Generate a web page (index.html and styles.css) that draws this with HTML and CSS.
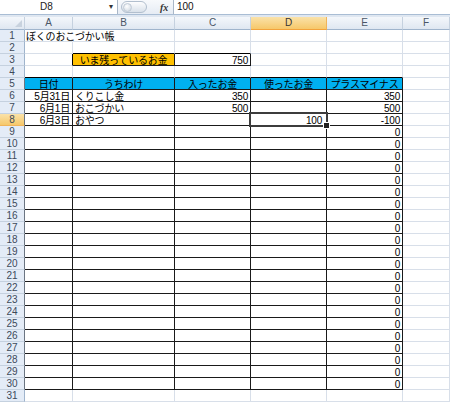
FILE: index.html
```html
<!DOCTYPE html>
<html lang="ja">
<head>
<meta charset="utf-8">
<title>ぼくのおこづかい帳</title>
<link rel="stylesheet" href="styles.css">
</head>
<body>
<div class="fbar">
  <div class="namebox"><span class="nb-text">D8</span><span class="nb-arrow">▾</span></div>
  <div class="fxarea">
    <span class="pill"><span class="knob"></span></span>
    <span class="fx">fx</span>
  </div>
  <div class="finput">100</div>
</div>
<div class="spacer"></div>
<div class="sheet">
  <div class="ch corner"><span class="tri"></span></div><div class="ch">A</div><div class="ch">B</div><div class="ch">C</div><div class="ch chsel">D</div><div class="ch">E</div><div class="ch">F</div>

  <div class="rh">1</div><div class="c over">ぼくのおこづかい帳</div><div class="c"></div><div class="c"></div><div class="c"></div><div class="c"></div><div class="c"></div>
  <div class="rh">2</div><div class="c"></div><div class="c bb"></div><div class="c bb"></div><div class="c"></div><div class="c"></div><div class="c"></div>
  <div class="rh">3</div><div class="c br"></div><div class="c t or ctr">いま残っているお金</div><div class="c t r">750</div><div class="c"></div><div class="c"></div><div class="c"></div>
  <div class="rh">4</div><div class="c bb"></div><div class="c bb"></div><div class="c bb"></div><div class="c bb"></div><div class="c bb"></div><div class="c"></div>
  <div class="rh bl">5</div><div class="c t hd ctr">日付</div><div class="c t hd ctr">うちわけ</div><div class="c t hd ctr">入ったお金</div><div class="c t hd ctr">使ったお金</div><div class="c t hd ctr">プラスマイナス</div><div class="c"></div>
  <div class="rh bl">6</div><div class="c t r">5月31日</div><div class="c t">くりこし金</div><div class="c t r">350</div><div class="c t"></div><div class="c t r">350</div><div class="c"></div>
  <div class="rh bl">7</div><div class="c t r">6月1日</div><div class="c t">おこづかい</div><div class="c t r">500</div><div class="c t"></div><div class="c t r">500</div><div class="c"></div>
  <div class="rh bl rsel">8</div><div class="c t r">6月3日</div><div class="c t">おやつ</div><div class="c t"></div><div class="c t r active">100</div><div class="c t r">-100</div><div class="c"></div>
  <div class="rh bl">9</div><div class="c t"></div><div class="c t"></div><div class="c t"></div><div class="c t"></div><div class="c t r">0</div><div class="c"></div>
  <div class="rh bl">10</div><div class="c t"></div><div class="c t"></div><div class="c t"></div><div class="c t"></div><div class="c t r">0</div><div class="c"></div>
  <div class="rh bl">11</div><div class="c t"></div><div class="c t"></div><div class="c t"></div><div class="c t"></div><div class="c t r">0</div><div class="c"></div>
  <div class="rh bl">12</div><div class="c t"></div><div class="c t"></div><div class="c t"></div><div class="c t"></div><div class="c t r">0</div><div class="c"></div>
  <div class="rh bl">13</div><div class="c t"></div><div class="c t"></div><div class="c t"></div><div class="c t"></div><div class="c t r">0</div><div class="c"></div>
  <div class="rh bl">14</div><div class="c t"></div><div class="c t"></div><div class="c t"></div><div class="c t"></div><div class="c t r">0</div><div class="c"></div>
  <div class="rh bl">15</div><div class="c t"></div><div class="c t"></div><div class="c t"></div><div class="c t"></div><div class="c t r">0</div><div class="c"></div>
  <div class="rh bl">16</div><div class="c t"></div><div class="c t"></div><div class="c t"></div><div class="c t"></div><div class="c t r">0</div><div class="c"></div>
  <div class="rh bl">17</div><div class="c t"></div><div class="c t"></div><div class="c t"></div><div class="c t"></div><div class="c t r">0</div><div class="c"></div>
  <div class="rh bl">18</div><div class="c t"></div><div class="c t"></div><div class="c t"></div><div class="c t"></div><div class="c t r">0</div><div class="c"></div>
  <div class="rh bl">19</div><div class="c t"></div><div class="c t"></div><div class="c t"></div><div class="c t"></div><div class="c t r">0</div><div class="c"></div>
  <div class="rh bl">20</div><div class="c t"></div><div class="c t"></div><div class="c t"></div><div class="c t"></div><div class="c t r">0</div><div class="c"></div>
  <div class="rh bl">21</div><div class="c t"></div><div class="c t"></div><div class="c t"></div><div class="c t"></div><div class="c t r">0</div><div class="c"></div>
  <div class="rh bl">22</div><div class="c t"></div><div class="c t"></div><div class="c t"></div><div class="c t"></div><div class="c t r">0</div><div class="c"></div>
  <div class="rh bl">23</div><div class="c t"></div><div class="c t"></div><div class="c t"></div><div class="c t"></div><div class="c t r">0</div><div class="c"></div>
  <div class="rh bl">24</div><div class="c t"></div><div class="c t"></div><div class="c t"></div><div class="c t"></div><div class="c t r">0</div><div class="c"></div>
  <div class="rh bl">25</div><div class="c t"></div><div class="c t"></div><div class="c t"></div><div class="c t"></div><div class="c t r">0</div><div class="c"></div>
  <div class="rh bl">26</div><div class="c t"></div><div class="c t"></div><div class="c t"></div><div class="c t"></div><div class="c t r">0</div><div class="c"></div>
  <div class="rh bl">27</div><div class="c t"></div><div class="c t"></div><div class="c t"></div><div class="c t"></div><div class="c t r">0</div><div class="c"></div>
  <div class="rh bl">28</div><div class="c t"></div><div class="c t"></div><div class="c t"></div><div class="c t"></div><div class="c t r">0</div><div class="c"></div>
  <div class="rh bl">29</div><div class="c t"></div><div class="c t"></div><div class="c t"></div><div class="c t"></div><div class="c t r">0</div><div class="c"></div>
  <div class="rh bl">30</div><div class="c t"></div><div class="c t"></div><div class="c t"></div><div class="c t"></div><div class="c t r">0</div><div class="c"></div>
  <div class="rh">31</div><div class="c"></div><div class="c"></div><div class="c"></div><div class="c"></div><div class="c"></div><div class="c"></div>
</div>
</body>
</html>
```
FILE: styles.css
```css
* { box-sizing: border-box; }
html, body { margin: 0; padding: 0; }
body {
  width: 450px;
  height: 403px;
  overflow: hidden;
  background: #ffffff;
  font-family: "Liberation Sans", "Noto Sans CJK JP", sans-serif;
  color: #000;
}

/* formula bar */
.fbar {
  display: flex;
  height: 15px;
  background: linear-gradient(#f7f9fc, #e6ecf4);
  border-bottom: 1px solid #a9bdd4;
  font-size: 10px;
}
.namebox {
  width: 118px;
  background: #fff;
  border-right: 1px solid #a9b7c8;
  display: flex;
  align-items: center;
}
.nb-text {
  flex: 1;
  text-align: center;
  line-height: 14px;
  color: #222;
  margin-right: 12px;
}
.nb-arrow {
  width: 12px;
  text-align: center;
  font-size: 8px;
  color: #333;
  line-height: 14px;
}
.fxarea {
  width: 55px;
  display: flex;
  align-items: center;
  padding-left: 3px;
}
.pill {
  width: 26px;
  height: 12px;
  border-radius: 6px;
  background: linear-gradient(#fdfdfe, #d9e1ea);
  border: 1px solid #b2bfce;
  display: flex;
  align-items: center;
  padding-left: 1px;
}
.knob {
  width: 9px;
  height: 9px;
  border-radius: 50%;
  background: radial-gradient(circle at 40% 35%, #ffffff, #c9d3de);
  border: 1px solid #c0cad6;
}
.fx {
  margin-left: 13px;
  font-family: "Liberation Serif", serif;
  font-style: italic;
  font-weight: bold;
  font-size: 10px;
  color: #333;
}
.finput {
  flex: 1;
  background: #fff;
  border-left: 1px solid #a9b7c8;
  padding-left: 3px;
  line-height: 14px;
  color: #111;
}
.spacer {
  height: 2px;
  background: #dfe7f1;
}

/* sheet */
.sheet {
  display: grid;
  grid-template-columns: 25px 48px 102px 76px 76px 76px 47px;
  grid-template-rows: 13px repeat(31, 12px);
  font-size: 10px;
}
.ch {
  background: linear-gradient(#f4f7fb, #dfe7f1);
  border-right: 1px solid #c5d1df;
  border-bottom: 1px solid #9fb4cc;
  text-align: center;
  line-height: 12px;
  color: #4a5666;
  font-size: 10px;
}
.corner {
  position: relative;
}
.tri {
  position: absolute;
  right: 2px;
  bottom: 2px;
  width: 0;
  height: 0;
  border-left: 7px solid transparent;
  border-bottom: 7px solid #c8d2de;
}
.chsel {
  background: linear-gradient(#fae2a9, #f6c86a);
  border-bottom: 1px solid #f2a33c;
  border-right: 1px solid #f0b45a;
  color: #333;
}
.rh {
  background: #e4ecf7;
  border-right: 1px solid #9fb4cc;
  border-bottom: 1px solid #c5d1df;
  text-align: center;
  line-height: 11px;
  color: #3d4a5a;
  font-size: 10px;
}
.rh.bl { border-right-color: #6b7582; }
.rh.rsel {
  background: linear-gradient(#fae2a9, #f6c86a);
  border-bottom-color: #f0b45a;
}
.c {
  border-right: 1px solid #d8dfe9;
  border-bottom: 1px solid #d8dfe9;
  line-height: 11px;
  height: 12px;
  padding: 1px 2px 0;
  white-space: nowrap;
  letter-spacing: -0.2px;
}
.over {
  border-right-color: #fff;
  padding-left: 1px;
}
.bb { border-bottom-color: #000; }
.br { border-right-color: #000; }
.t {
  border-right-color: #1a1a1a;
  border-bottom-color: #1a1a1a;
}
.r { text-align: right; }
.ctr { text-align: center; }
.or { background: #ffc000; }
.hd { background: #00b0f0; }
.active {
  position: relative;
  padding-right: 4px;
}
.active::after {
  content: "";
  position: absolute;
  left: -2px;
  top: -2px;
  right: -2px;
  bottom: -2px;
  border: 2px solid #3c3c3c;
}
.active::before {
  content: "";
  position: absolute;
  right: -4px;
  bottom: -4px;
  width: 5px;
  height: 5px;
  background: #222;
  border: 1px solid #fff;
  z-index: 2;
}
```
